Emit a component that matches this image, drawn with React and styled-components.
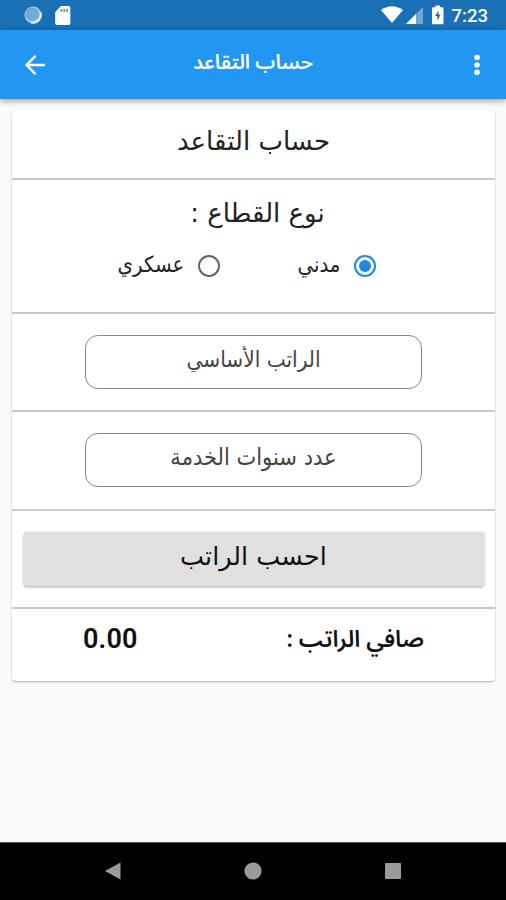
import { useState } from "react";
import styled, { createGlobalStyle } from "styled-components";

const colors = {
  statusBar: "#1a70b5",
  primary: "#2196f3",
  radio: "#1e88e5",
  page: "#fafafa",
  line: "#c9c9c9",
  button: "#e0e0e0",
  nav: "#9b9b9b",
};

const condensed = `"DejaVu Sans Condensed", "DejaVu Sans", sans-serif`;
const strong = `"Noto Sans Arabic", "Noto Sans", "DejaVu Sans", sans-serif`;

export default function App() {
  const [sector, setSector] = useState("civil");

  return (
    <>
      <GlobalStyle />
      <Screen>
        <StatusBar>
          <StatusIcons>
            <SyncIcon />
            <SdCardIcon />
          </StatusIcons>
          <StatusIcons>
            <SignalIcons />
            <Clock>7:23</Clock>
          </StatusIcons>
        </StatusBar>
        <AppBar>
          <IconButton aria-label="رجوع">
            <svg width="24" height="24" viewBox="0 0 24 24" fill="none">
              <path
                d="M22 12H4M12.500 2.800L3.500 12l9 9.200"
                stroke="#fff"
                strokeWidth="2.4"
              />
            </svg>
          </IconButton>
          <AppTitle>حساب التقاعد</AppTitle>
          <IconButton aria-label="القائمة">
            <svg width="24" height="24" viewBox="0 0 24 24" fill="#fff">
              <circle cx="12" cy="4.5" r="2.8" />
              <circle cx="12" cy="12" r="2.8" />
              <circle cx="12" cy="19.3" r="2.8" />
            </svg>
          </IconButton>
        </AppBar>
        <Content>
          <Card>
            <Section $height={70} $top={9}>
              <Heading>حساب التقاعد</Heading>
            </Section>
            <Section $height={134} $top={11}>
              <Heading $shift={8}>نوع القطاع :</Heading>
              <RadioGroup>
                <Option onClick={() => setSector("civil")}>
                  <Radio $checked={sector === "civil"} />
                  مدني
                </Option>
                <Option onClick={() => setSector("military")}>
                  <Radio $checked={sector === "military"} />
                  عسكري
                </Option>
              </RadioGroup>
            </Section>
            <Section $height={98}>
              <Field placeholder="الراتب الأساسي" />
            </Section>
            <Section $height={99}>
              <Field $size={23.4} placeholder="عدد سنوات الخدمة" />
            </Section>
            <Section $height={98}>
              <SubmitButton>احسب الراتب</SubmitButton>
            </Section>
            <Result>
              <ResultLabel>صافي الراتب :</ResultLabel>
              <Amount>0.00</Amount>
            </Result>
          </Card>
        </Content>
        <NavBar>
          <svg width="18" height="18" viewBox="0 0 18 18">
            <path d="M16.5 .5v17L1 9z" />
          </svg>
          <svg width="18" height="18" viewBox="0 0 18 18">
            <circle cx="9" cy="9" r="8.6" />
          </svg>
          <svg width="18" height="18" viewBox="0 0 18 18">
            <rect x="1" y="1" width="16" height="16" rx="1" />
          </svg>
        </NavBar>
      </Screen>
    </>
  );
}

function SyncIcon() {
  return (
    <svg width="18" height="18" viewBox="0 0 18 18">
      <circle cx="9" cy="9" r="8.5" fill="#a9cce8" />
      <circle cx="8.2" cy="8.2" r="6.9" fill="#76aad6" />
      <path
        d="M16.6 6.5a8 8 0 0 1-10 10"
        fill="none"
        stroke="#e9f3fb"
        strokeWidth="1.8"
      />
    </svg>
  );
}

function SdCardIcon() {
  return (
    <svg width="16" height="19" viewBox="0 0 16 19">
      <path
        d="M6 0h7.500a1.800 1.800 0 0 1 1.800 1.800v15.400a1.800 1.800 0 0 1-1.800 1.800H2a1.800 1.800 0 0 1-1.800-1.800V6z"
        fill="#fff"
      />
      <path
        d="M5.500 3h1.800v3H5.500zM8.400 3h1.800v3H8.400zM11.300 3h1.800v3h-1.800z"
        fill="#5f9acb"
      />
    </svg>
  );
}

function SignalIcons() {
  return (
    <svg width="64" height="20" viewBox="0 0 64 20">
      <path d="M1 5Q12 -2.500 23 5L12 18z" fill="#fff" />
      <path d="M43 2v17H26z" fill="#6ea6d3" />
      <path d="M36 9v10H26z" fill="#fff" />
      <path
        d="M55.500 .5h4.500v1.800h2.200a1.300 1.300 0 0 1 1.300 1.300v14.300a1.300 1.300 0 0 1-1.300 1.300h-8.900a1.300 1.300 0 0 1-1.300-1.300V3.600a1.300 1.300 0 0 1 1.300-1.300h2.200z"
        fill="#fff"
      />
      <path
        d="M58.500 5.500l-3.400 5.600h2.200v4.400l3.300-5.700h-2.100z"
        fill={colors.statusBar}
      />
    </svg>
  );
}

const GlobalStyle = createGlobalStyle`
  * {
    box-sizing: border-box;
  }

  body {
    margin: 0;
    font-family: "DejaVu Sans", sans-serif;
  }

  button,
  input {
    font-family: inherit;
  }
`;

const Screen = styled.div`
  display: flex;
  flex-direction: column;
  height: 900px;
  background-color: ${colors.page};
`;

const StatusBar = styled.div`
  display: flex;
  justify-content: space-between;
  height: 30px;
  padding: 0 18px 0 24px;
  background-color: ${colors.statusBar};
`;

const StatusIcons = styled.div`
  display: flex;
  align-items: center;
  gap: 13px;

  & + & {
    gap: 8px;
  }
`;

const Clock = styled.span`
  padding-top: 2px;
  font-family: Roboto, sans-serif;
  font-size: 18.5px;
  font-weight: 500;
  line-height: 30px;
  color: white;
`;

const AppBar = styled.header`
  display: flex;
  align-items: center;
  justify-content: space-between;
  height: 69px;
  padding: 0 17px 0 23px;
  background-color: ${colors.primary};
  box-shadow: 0 2px 6px rgba(0, 0, 0, 0.38);
`;

const IconButton = styled.button`
  display: flex;
  padding: 0;
  border: none;
  background: none;
  cursor: pointer;
`;

const AppTitle = styled.h1`
  margin: 0 6px 4px 0;
  font-family: ${strong};
  font-size: 20px;
  font-weight: 650;
  line-height: 40px;
  color: white;
  direction: rtl;
`;

const Content = styled.main`
  flex: 1;
  padding: 11px 11px 0 12px;
`;

const Card = styled.div`
  direction: rtl;
  height: 571px;
  border-radius: 4px;
  background-color: white;
  box-shadow: 0 1px 2px rgba(0, 0, 0, 0.32);
`;

const Section = styled.section`
  display: flex;
  flex-direction: column;
  align-items: center;
  height: ${({ $height }) => $height}px;
  padding-top: ${({ $top }) => $top || 21}px;
  border-bottom: 2px solid ${colors.line};
`;

const Heading = styled.h2`
  margin: 0;
  padding-left: ${({ $shift }) => $shift || 0}px;
  font-size: 26px;
  font-weight: normal;
  line-height: 44px;
  color: #222;
`;

const RadioGroup = styled.div`
  display: flex;
  gap: 75px;
  margin: 9px 13px 0 0;
`;

const Option = styled.label`
  display: flex;
  align-items: center;
  gap: 14px;
  font-family: ${condensed};
  font-size: 22px;
  line-height: 42px;
  color: #222;
  cursor: pointer;
`;

const Radio = styled.span`
  width: 22px;
  height: 22px;
  margin-top: 2px;
  border: 2px solid ${({ $checked }) => ($checked ? colors.radio : "#666")};
  border-radius: 50%;
  padding: 3px;
  background: ${({ $checked }) => ($checked ? colors.radio : "none")} content-box;

  label + label > & {
    margin-right: 2px;
  }
`;

const Field = styled.input`
  width: 337px;
  height: 54px;
  padding: 0 10px 6px;
  border: 1px solid #888;
  border-radius: 13px;
  outline: none;
  background: none;
  font-family: ${condensed};
  font-size: ${({ $size }) => $size || 22.4}px;
  text-align: center;

  &::placeholder {
    color: #444;
    opacity: 1;
  }
`;

const SubmitButton = styled.button`
  width: 460px;
  height: 54px;
  padding: 0 0 7px;
  border: none;
  border-radius: 2px;
  background-color: ${colors.button};
  box-shadow: 0 1px 3px rgba(0, 0, 0, 0.35);
  font-size: 25.5px;
  color: #111;
  cursor: pointer;
`;

const Result = styled.div`
  display: flex;
  align-items: center;
  justify-content: space-between;
  height: 60px;
  padding: 0 71px;
  color: #111;
`;

const ResultLabel = styled.span`
  font-family: ${strong};
  font-size: 23px;
  font-weight: 600;
`;

const Amount = styled.span`
  font-family: Roboto, sans-serif;
  font-size: 27px;
  font-weight: 600;
  letter-spacing: 0.2px;
`;

const NavBar = styled.nav`
  display: flex;
  align-items: center;
  justify-content: center;
  gap: 122px;
  height: 58px;
  padding-bottom: 2px;
  background-color: black;
  border-top: 1px solid #555;

  & svg {
    fill: ${colors.nav};
  }
`;
